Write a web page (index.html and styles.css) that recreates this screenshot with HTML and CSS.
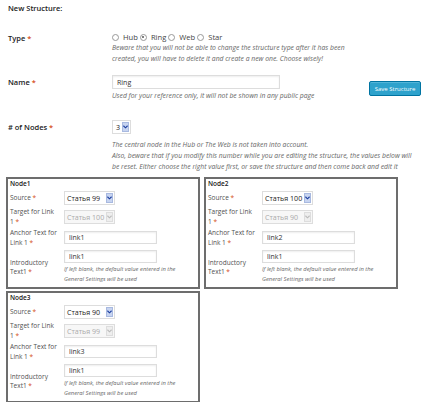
FILE: index.html
```html
<!DOCTYPE html>
<html lang="en">
<head>
  <meta charset="UTF-8">
  <title>New Structure</title>
  <link rel="stylesheet" href="styles.css">
</head>
<body>

<div class="page">
  <h3 class="title">New Structure:</h3>

  <div class="row row-type">
    <div class="label">Type <span class="req">*</span></div>
    <div class="field">
      <div class="radios">
        <label class="radio"><span class="dot"></span>Hub</label>
        <label class="radio"><span class="dot on"></span>Ring</label>
        <label class="radio"><span class="dot"></span>Web</label>
        <label class="radio"><span class="dot"></span>Star</label>
      </div>
      <p class="desc">Beware that you will not be able to change the structure type after it has been<br>created, you will have to delete it and create a new one. Choose wisely!</p>
    </div>
  </div>

  <div class="row row-name">
    <div class="label">Name <span class="req">*</span></div>
    <div class="field">
      <input class="text name-input" type="text" value="Ring">
      <p class="desc">Used for your reference only, it will not be shown in any public page</p>
    </div>
    <button class="save">Save Structure</button>
  </div>

  <div class="row row-nodes">
    <div class="label"># of Nodes <span class="req">*</span></div>
    <div class="field">
      <div class="select small">
        <span class="val">3</span>
        <span class="arrow"><svg width="6" height="4" viewBox="0 0 6 4"><path d="M0.5 0.5 L3 3 L5.5 0.5" fill="none" stroke="#1a3d9e" stroke-width="1.3"/></svg></span>
      </div>
      <p class="desc">The central node in the Hub or The Web is not taken into account.<br>Also, beware that if you modify this number while you are editing the structure, the values below will<br>be reset. Either choose the right value first, or save the structure and then come back and edit it</p>
    </div>
  </div>

  <div class="nodes">
    <!-- one box per node -->
    <div class="node">
      <div class="node-title">Node1</div>
      <div class="nrow">
        <div class="nlabel">Source <span class="req">*</span></div>
        <div class="select"><span class="val">Статья 99</span><span class="arrow"><svg width="6" height="4" viewBox="0 0 6 4"><path d="M0.5 0.5 L3 3 L5.5 0.5" fill="none" stroke="#1a3d9e" stroke-width="1.3"/></svg></span></div>
      </div>
      <div class="nrow nrow-target">
        <div class="nlabel">Target for Link<br>1 <span class="req">*</span></div>
        <div class="select disabled"><span class="val">Статья 100</span><span class="arrow"><svg width="6" height="4" viewBox="0 0 6 4"><path d="M0.5 0.5 L3 3 L5.5 0.5" fill="none" stroke="#bbb" stroke-width="1.3"/></svg></span></div>
      </div>
      <div class="nrow nrow-anchor">
        <div class="nlabel">Anchor Text for<br>Link 1 <span class="req">*</span></div>
        <input class="text ninput" type="text" value="link1">
      </div>
      <div class="nrow nrow-intro">
        <div class="nlabel">Introductory<br>Text1 <span class="req">*</span></div>
        <div class="nfield">
          <input class="text ninput" type="text" value="link1">
          <p class="ndesc">If left blank, the default value entered in the<br>General Settings will be used</p>
        </div>
      </div>
    </div>

    <div class="node">
      <div class="node-title">Node2</div>
      <div class="nrow">
        <div class="nlabel">Source <span class="req">*</span></div>
        <div class="select"><span class="val">Статья 100</span><span class="arrow"><svg width="6" height="4" viewBox="0 0 6 4"><path d="M0.5 0.5 L3 3 L5.5 0.5" fill="none" stroke="#1a3d9e" stroke-width="1.3"/></svg></span></div>
      </div>
      <div class="nrow nrow-target">
        <div class="nlabel">Target for Link<br>1 <span class="req">*</span></div>
        <div class="select disabled"><span class="val">Статья 90</span><span class="arrow"><svg width="6" height="4" viewBox="0 0 6 4"><path d="M0.5 0.5 L3 3 L5.5 0.5" fill="none" stroke="#bbb" stroke-width="1.3"/></svg></span></div>
      </div>
      <div class="nrow nrow-anchor">
        <div class="nlabel">Anchor Text for<br>Link 1 <span class="req">*</span></div>
        <input class="text ninput" type="text" value="link2">
      </div>
      <div class="nrow nrow-intro">
        <div class="nlabel">Introductory<br>Text1 <span class="req">*</span></div>
        <div class="nfield">
          <input class="text ninput" type="text" value="link1">
          <p class="ndesc">If left blank, the default value entered in the<br>General Settings will be used</p>
        </div>
      </div>
    </div>

    <div class="node">
      <div class="node-title">Node3</div>
      <div class="nrow">
        <div class="nlabel">Source <span class="req">*</span></div>
        <div class="select"><span class="val">Статья 90</span><span class="arrow"><svg width="6" height="4" viewBox="0 0 6 4"><path d="M0.5 0.5 L3 3 L5.5 0.5" fill="none" stroke="#1a3d9e" stroke-width="1.3"/></svg></span></div>
      </div>
      <div class="nrow nrow-target">
        <div class="nlabel">Target for Link<br>1 <span class="req">*</span></div>
        <div class="select disabled"><span class="val">Статья 99</span><span class="arrow"><svg width="6" height="4" viewBox="0 0 6 4"><path d="M0.5 0.5 L3 3 L5.5 0.5" fill="none" stroke="#bbb" stroke-width="1.3"/></svg></span></div>
      </div>
      <div class="nrow nrow-anchor">
        <div class="nlabel">Anchor Text for<br>Link 1 <span class="req">*</span></div>
        <input class="text ninput" type="text" value="link3">
      </div>
      <div class="nrow nrow-intro">
        <div class="nlabel">Introductory<br>Text1 <span class="req">*</span></div>
        <div class="nfield">
          <input class="text ninput" type="text" value="link1">
          <p class="ndesc">If left blank, the default value entered in the<br>General Settings will be used</p>
        </div>
      </div>
    </div>
  </div>
</div>

</body>
</html>
```

FILE: styles.css
```css
body {
  margin: 0;
  padding: 0;
  font-family: "Open Sans", "Noto Sans", sans-serif;
  color: #333;
  background: #fff;
}
.page {
  padding: 3px 6px 0 6px;
  width: 412px;
}
.title {
  margin: 0 0 0 2px;
  font-size: 7.5px;
  font-weight: 600;
  line-height: 10px;
  color: #222;
}
.req { color: #d54e21; }

.row {
  display: flex;
  align-items: flex-start;
}
.label {
  width: 104px;
  padding-left: 2px;
  font-size: 7.5px;
  font-weight: 600;
  color: #222;
  line-height: 10px;
}
.field { flex: 1; }
.desc {
  margin: 0;
  font-size: 6.8px;
  font-style: italic;
  color: #666;
  line-height: 11px;
}

.row-type { margin-top: 19px; }
.row-type .label { margin-top: 1px; }
.radios {
  display: flex;
  gap: 2px;
  font-size: 7.6px;
  line-height: 10px;
  color: #444;
}
.radio {
  display: flex;
  align-items: center;
  gap: 4px;
}
.dot {
  width: 7px;
  height: 7px;
  border: 1px solid #999;
  border-radius: 50%;
  box-sizing: border-box;
  position: relative;
}
.dot.on::after {
  content: "";
  position: absolute;
  left: 1.5px;
  top: 1.5px;
  width: 2px;
  height: 2px;
  border-radius: 50%;
  background: #555;
}

.row-name { margin-top: 11px; }
.row-name .label { margin-top: 2px; }
.text {
  box-sizing: border-box;
  border: 1px solid #ddd;
  box-shadow: inset 0 1px 2px rgba(0,0,0,0.07);
  font-family: "Open Sans", "Noto Sans", sans-serif;
  color: #333;
  padding: 0 4px;
  margin: 0;
  outline: none;
  background: #fff;
}
.name-input {
  width: 168px;
  height: 14px;
  font-size: 7px;
  display: block;
}
.row-name .desc { margin-top: 1px; }
.save {
  margin: 6px -3px 0 0;
  width: 52px;
  height: 15px;
  padding: 0;
  background: #2ea2cc;
  border: 1px solid #0074a2;
  border-radius: 2px;
  box-shadow: inset 0 1px 0 rgba(120,200,230,0.5);
  color: #fff;
  font-family: "Open Sans", "Noto Sans", sans-serif;
  font-size: 6px;
}

.row-nodes { margin-top: 19px; }
.row-nodes .label { margin-top: 2px; }
.row-nodes .desc { margin-top: 5px; }

.select {
  display: flex;
  align-items: center;
  justify-content: space-between;
  box-sizing: border-box;
  width: 51px;
  height: 14px;
  border: 1px solid #ddd;
  padding: 0 1px 0 2px;
  font-size: 7.1px;
  white-space: nowrap;
  color: #222;
  background: #fff;
}
.select.small { width: 19px; padding-left: 3px; }
.arrow {
  display: flex;
  align-items: center;
  justify-content: center;
  flex: none;
  width: 7px;
  height: 10px;
  background: #c7d4f0;
  border: 1px solid #a8b9e0;
  box-sizing: border-box;
}
.select.disabled { color: #aaa; background: #f7f7f7; }
.select.disabled .arrow { background: #eee; border-color: #ddd; }

.nodes {
  display: grid;
  grid-template-columns: 194px 194px;
  column-gap: 4px;
  row-gap: 2px;
  margin-top: 5px;
}
.node {
  box-sizing: border-box;
  height: 112px;
  overflow: hidden;
  border: 2px solid #6d6d6d;
  padding: 0 0 0 2px;
}
.node-title {
  font-size: 6.5px;
  font-weight: 600;
  color: #222;
  line-height: 10px;
  height: 12px;
}
.nrow {
  display: flex;
  align-items: center;
}
.nrow-target { margin-top: 2px; }
.nrow-anchor { margin-top: 2px; }
.nrow-intro { margin-top: 3px; }
.nlabel {
  width: 54px;
  font-size: 6.5px;
  line-height: 9.5px;
  color: #505050;
}
.ninput {
  width: 93px;
  height: 13px;
  font-size: 7px;
  display: block;
}
.nfield { display: flex; flex-direction: column; }
.ndesc {
  margin: 1px 0 0 0;
  font-size: 5.8px;
  font-style: italic;
  color: #666;
  line-height: 10px;
}
```
